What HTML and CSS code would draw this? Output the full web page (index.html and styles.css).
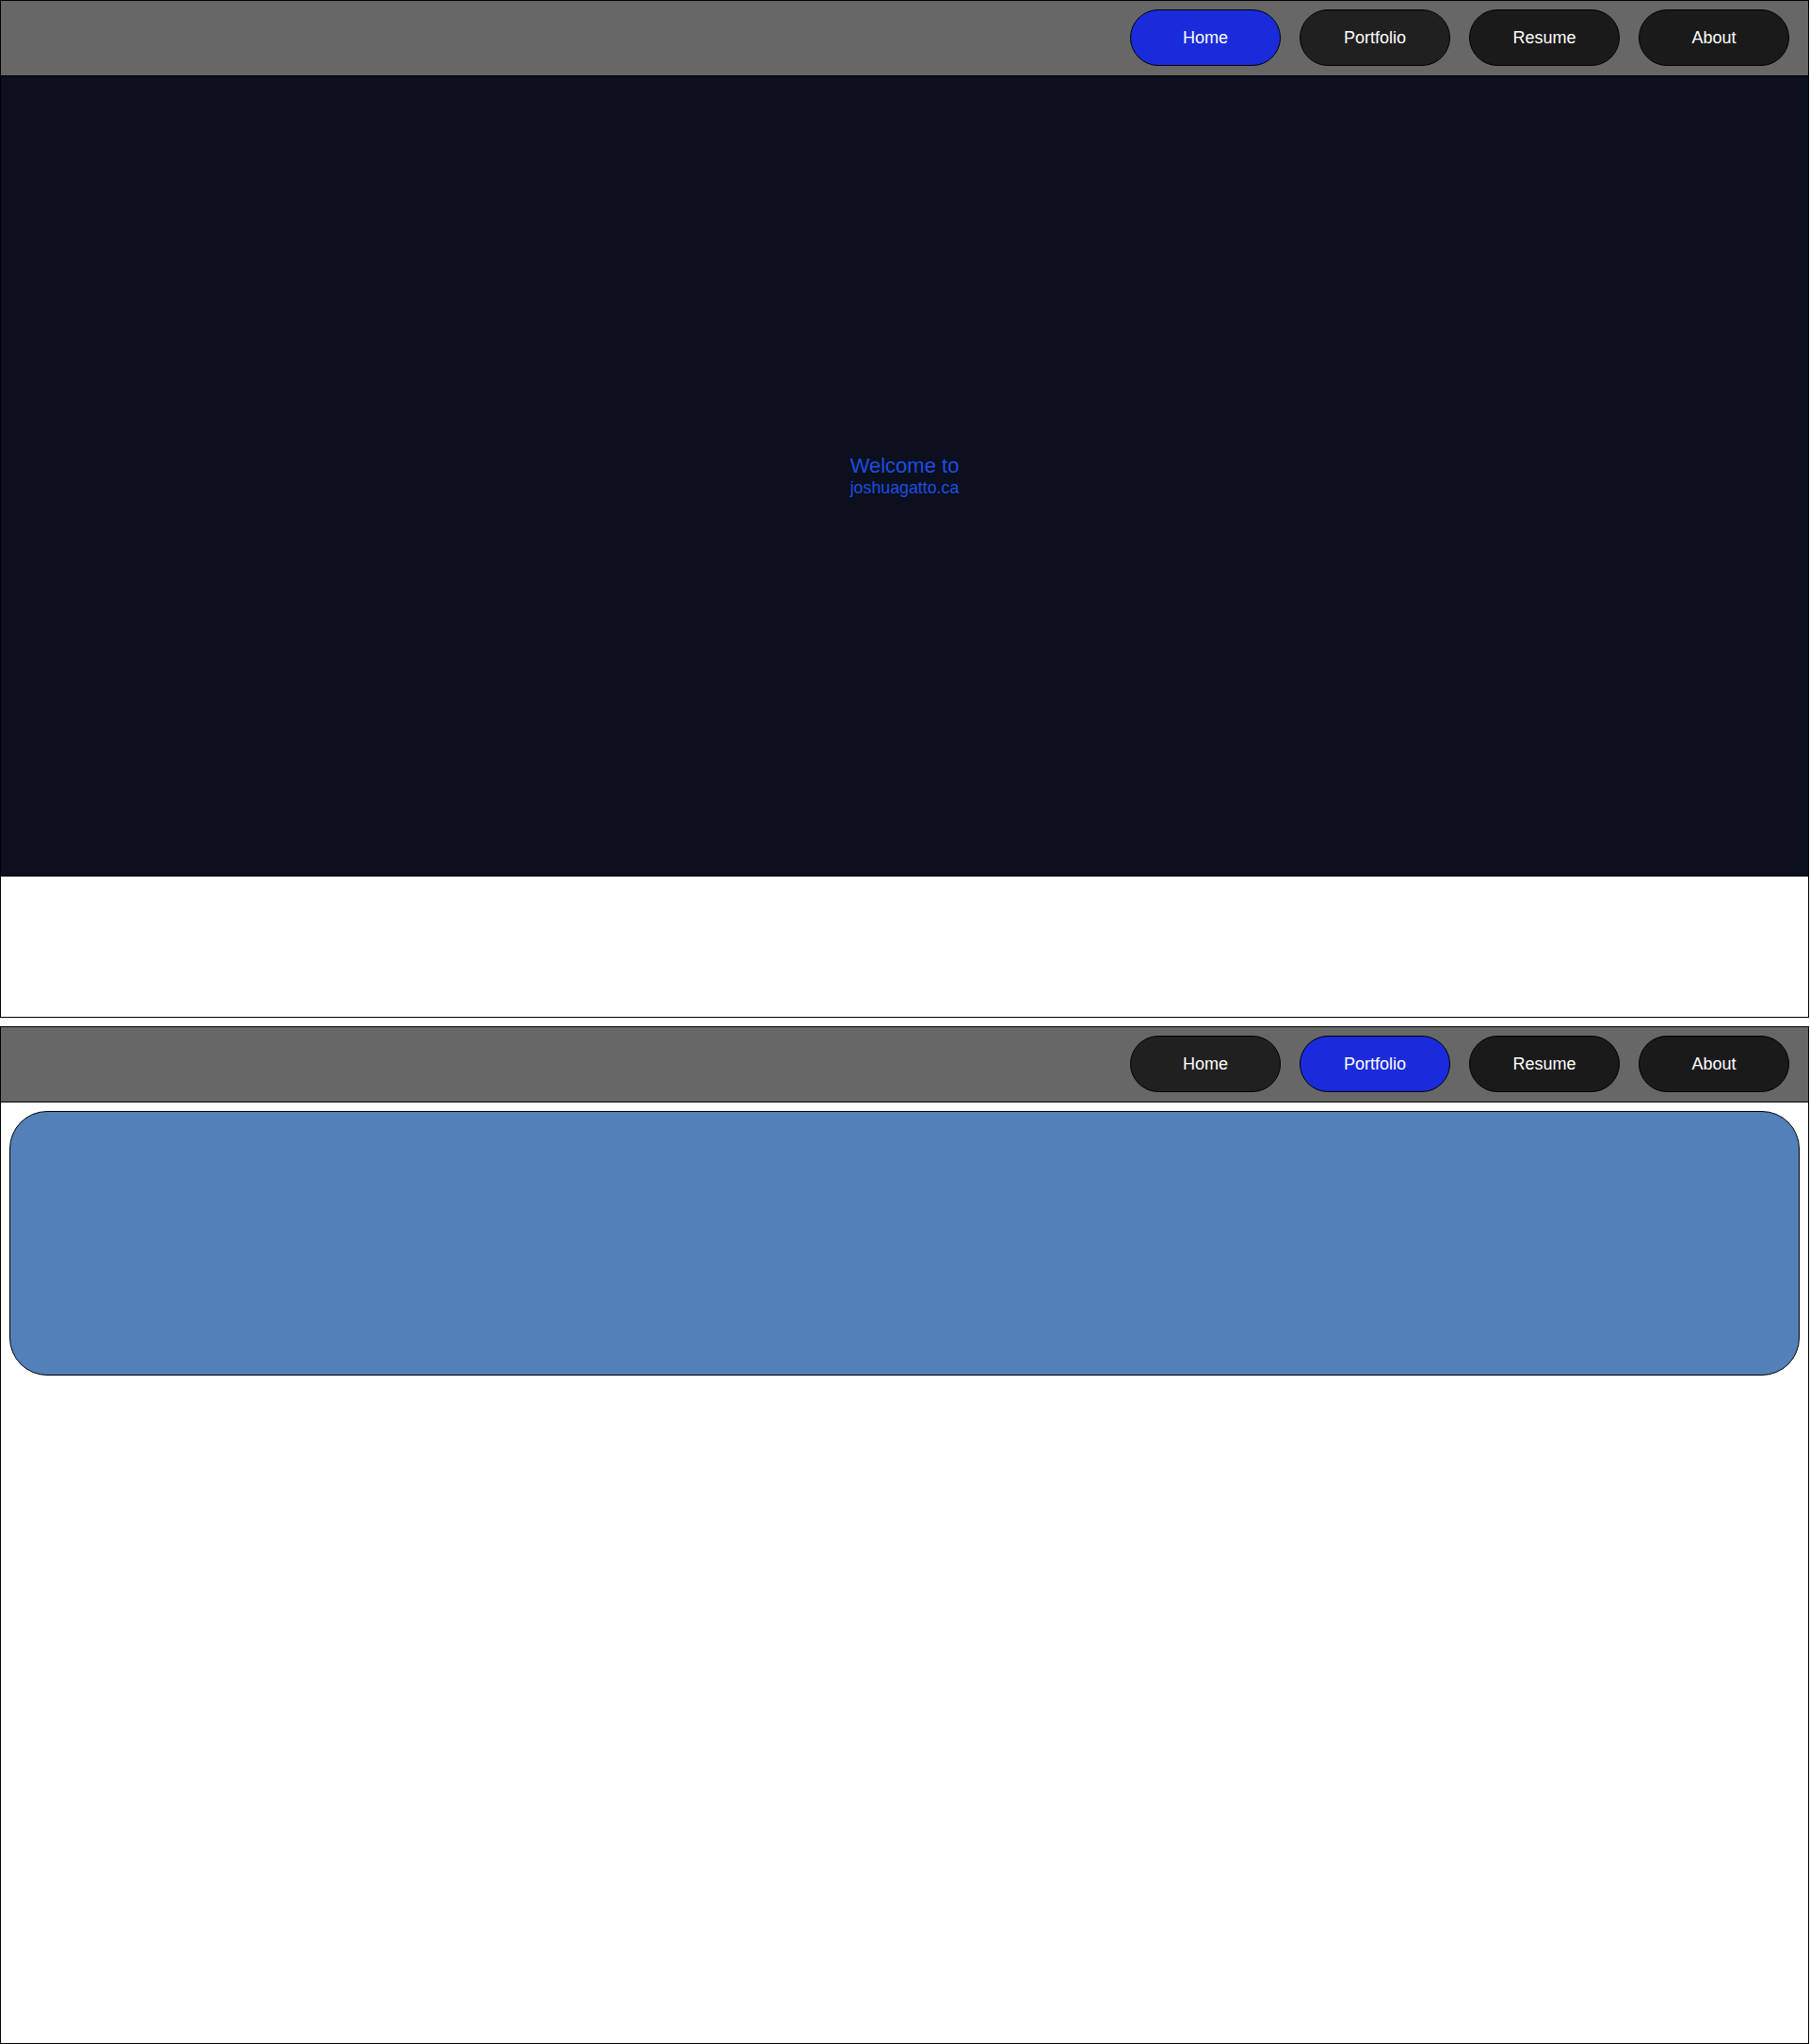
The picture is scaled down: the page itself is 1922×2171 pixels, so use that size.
FILE: index.html
```html
<!DOCTYPE html>
<html lang="en">
<head>
<meta charset="utf-8">
<title>joshuagatto.ca</title>
<link rel="stylesheet" href="styles.css">
</head>
<body>
  <section class="page">
    <header class="nav">
      <a class="nav-btn active">Home</a>
      <a class="nav-btn soft">Portfolio</a>
      <a class="nav-btn">Resume</a>
      <a class="nav-btn">About</a>
    </header>
    <div class="hero">
      <div class="hero-text">
        <div class="hero-title">Welcome to</div>
        <div class="hero-sub">joshuagatto.ca</div>
      </div>
    </div>
  </section>
  <section class="page">
    <header class="nav">
      <a class="nav-btn soft">Home</a>
      <a class="nav-btn active">Portfolio</a>
      <a class="nav-btn">Resume</a>
      <a class="nav-btn">About</a>
    </header>
    <div class="card"></div>
  </section>
</body>
</html>
```

FILE: styles.css
```css
html, body {
  margin: 0;
  padding: 0;
  background: #ffffff;
}

body {
  width: 1922px;
  font-family: "Liberation Sans", Arial, sans-serif;
  display: flex;
  flex-direction: column;
  gap: 9px;
}

.page {
  width: 1919px;
  height: 1079px;
  border: 1px solid #000000;
  background: #ffffff;
  display: flex;
  flex-direction: column;
}

.nav {
  height: 80px;
  box-sizing: border-box;
  padding: 9px 20px 0 0;
  background: #676767;
  border-bottom: 1px solid #000000;
  display: flex;
  justify-content: flex-end;
  align-items: flex-start;
  gap: 20px;
  flex: none;
}

.nav-btn {
  width: 160px;
  height: 60px;
  box-sizing: border-box;
  border: 1px solid #000000;
  border-radius: 30px;
  background: #1a1a1a;
  color: #ffffff;
  font-size: 18px;
  display: flex;
  align-items: center;
  justify-content: center;
  cursor: pointer;
}

.nav-btn.soft {
  background: #202020;
}

.nav-btn.active {
  background: #1a2bdc;
}

.hero {
  height: 849px;
  background: #0b0f1e;
  border-bottom: 1px solid #000000;
  display: flex;
  align-items: center;
  justify-content: center;
  flex: none;
}

.hero-text {
  text-align: center;
  color: #1c4ee0;
}

.hero-title {
  font-size: 22px;
}

.hero-sub {
  font-size: 17.8px;
}

.card {
  margin: 9px;
  height: 279px;
  border: 1px solid #000000;
  border-radius: 40px;
  background: #5480b9;
  flex: none;
}
```
